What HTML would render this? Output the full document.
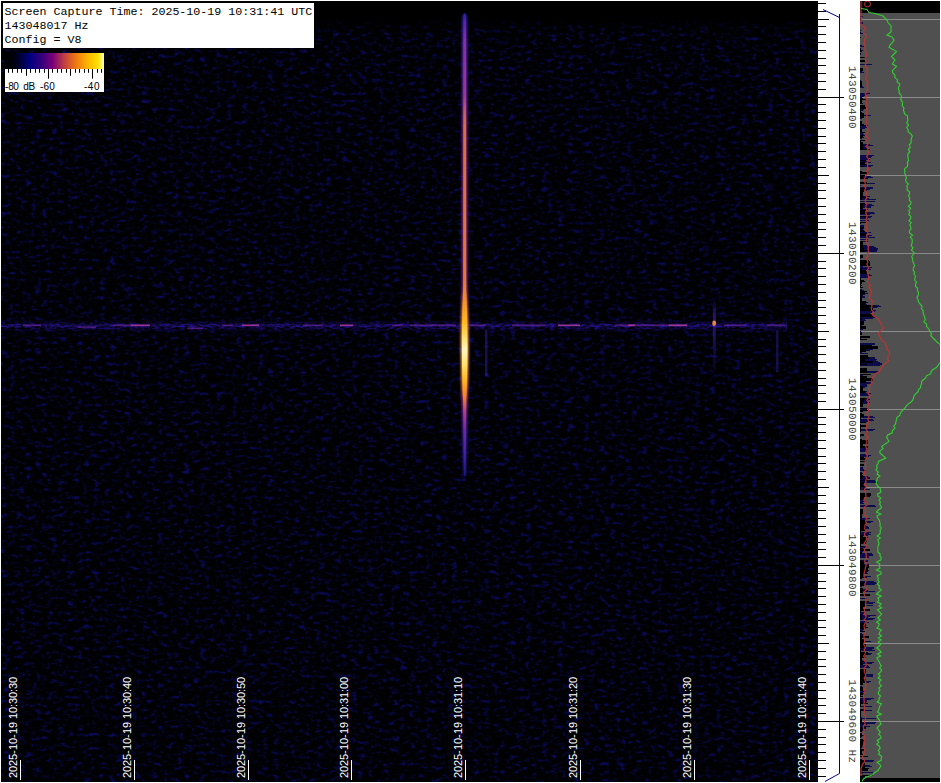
<!DOCTYPE html><html><head><meta charset="utf-8"><style>html,body{margin:0;padding:0;background:#fff;width:941px;height:783px;overflow:hidden}svg{display:block}</style></head><body>
<svg width="941" height="783" viewBox="0 0 941 783">
<defs>
<filter id="nz" x="0" y="0" width="100%" height="100%" color-interpolation-filters="sRGB">
<feTurbulence type="fractalNoise" baseFrequency="0.12 0.27" numOctaves="2" seed="5"/>
<feColorMatrix type="matrix" values="1 0 0 0 0  0 0 0 0 0  0 0 0 0 0  0 0 0 0 1" result="a"/>
<feTurbulence type="fractalNoise" baseFrequency="0.19 0.24" numOctaves="2" seed="23"/>
<feColorMatrix type="matrix" values="1 0 0 0 0  0 0 0 0 0  0 0 0 0 0  0 0 0 0 1" result="b"/>
<feComposite in="a" in2="b" operator="arithmetic" k1="0" k2="0.707" k3="0.707" k4="-0.207"/>
<feComponentTransfer><feFuncR type="table" tableValues="0 0 0 0 0 0.03 0.22 0.55 0.85 1 1"/><feFuncA type="linear" slope="0" intercept="1"/></feComponentTransfer>
<feColorMatrix type="matrix" values="0.035 0 0 0 0.003  0.035 0 0 0 0.003  0.34 0 0 0 0.008  0 0 0 0 1"/>
</filter>
<linearGradient id="cb" x1="0" x2="1" y1="0" y2="0">
<stop offset="0" stop-color="#000000"/><stop offset="0.1" stop-color="#000010"/><stop offset="0.25" stop-color="#000080"/><stop offset="0.38" stop-color="#3a007a"/><stop offset="0.48" stop-color="#7a007a"/><stop offset="0.6" stop-color="#c04040"/><stop offset="0.72" stop-color="#f07a10"/><stop offset="0.86" stop-color="#ffc000"/><stop offset="0.94" stop-color="#ffe000"/><stop offset="1" stop-color="#ffffc0"/>
</linearGradient>
<linearGradient id="vl" x1="0" x2="0" y1="0" y2="1" gradientUnits="userSpaceOnUse" >
</linearGradient>
</defs>
<rect x="1" y="1" width="817" height="781" fill="#000"/>
<mask id="nm" maskUnits="userSpaceOnUse" x="0" y="0" width="941" height="783"><rect x="1" y="18" width="817" height="764" fill="url(#fm)"/></mask><linearGradient id="fm" x1="0" x2="0" y1="18" y2="34" gradientUnits="userSpaceOnUse"><stop offset="0" stop-color="#000"/><stop offset="1" stop-color="#fff"/></linearGradient><rect x="1" y="18" width="817" height="764" filter="url(#nz)" mask="url(#nm)"/>
<filter id="sb2" x="-0.2" y="-2" width="1.4" height="5"><feGaussianBlur stdDeviation="0.5"/></filter>
<linearGradient id="hb" x1="0" x2="0" y1="321" y2="331" gradientUnits="userSpaceOnUse"><stop offset="0" stop-color="#1a1a90" stop-opacity="0"/><stop offset="0.45" stop-color="#2a1aa0" stop-opacity="0.5"/><stop offset="0.7" stop-color="#1a1a90" stop-opacity="0.3"/><stop offset="1" stop-color="#1a1a90" stop-opacity="0"/></linearGradient>
<filter id="nz2" x="0" y="0" width="100%" height="100%" color-interpolation-filters="sRGB"><feTurbulence type="fractalNoise" baseFrequency="0.2 0.5" numOctaves="2" seed="11"/><feComponentTransfer><feFuncR type="table" tableValues="0 0 0 0 0.1 0.45 0.8 1 1 1 1"/></feComponentTransfer><feColorMatrix type="matrix" values="0.12 0 0 0 0  0.05 0 0 0 0  0.5 0 0 0 0  0 0 0 0 1"/></filter>
<mask id="hm" maskUnits="userSpaceOnUse" x="0" y="0" width="941" height="783"><rect x="1" y="320" width="786" height="12" fill="url(#hmg)"/></mask><linearGradient id="hmg" x1="0" x2="0" y1="320" y2="332" gradientUnits="userSpaceOnUse"><stop offset="0" stop-color="#000"/><stop offset="0.45" stop-color="#fff"/><stop offset="0.7" stop-color="#ccc"/><stop offset="1" stop-color="#000"/></linearGradient>
<rect x="1" y="320" width="786" height="12" filter="url(#nz2)" mask="url(#hm)"/>
<rect x="1" y="324" width="786" height="3" fill="#2a1aa0" opacity="0.25"/>
<rect x="23" y="324.5" width="18" height="1.6" fill="#7a2aa8" opacity="0.55" filter="url(#sb2)"/>
<rect x="78" y="326.5" width="18" height="1.6" fill="#7a2aa8" opacity="0.55" filter="url(#sb2)"/>
<rect x="113" y="324.5" width="18" height="1.6" fill="#7a2aa8" opacity="0.55" filter="url(#sb2)"/>
<rect x="187" y="327.5" width="16" height="1.6" fill="#7a2aa8" opacity="0.55" filter="url(#sb2)"/>
<rect x="222" y="324.5" width="11" height="1.6" fill="#7a2aa8" opacity="0.55" filter="url(#sb2)"/>
<rect x="303" y="324.5" width="20" height="1.6" fill="#7a2aa8" opacity="0.55" filter="url(#sb2)"/>
<rect x="392" y="324.5" width="11" height="1.6" fill="#7a2aa8" opacity="0.55" filter="url(#sb2)"/>
<rect x="410" y="324.5" width="46" height="1.6" fill="#7a2aa8" opacity="0.55" filter="url(#sb2)"/>
<rect x="470" y="324.5" width="16" height="1.6" fill="#7a2aa8" opacity="0.55" filter="url(#sb2)"/>
<rect x="512" y="324.5" width="33" height="1.6" fill="#7a2aa8" opacity="0.55" filter="url(#sb2)"/>
<rect x="615" y="324.5" width="72" height="1.6" fill="#7a2aa8" opacity="0.55" filter="url(#sb2)"/>
<rect x="724" y="324.5" width="22" height="1.6" fill="#7a2aa8" opacity="0.55" filter="url(#sb2)"/>
<rect x="767" y="324.5" width="18" height="1.6" fill="#7a2aa8" opacity="0.55" filter="url(#sb2)"/>
<rect x="131" y="324.5" width="19" height="1.6" fill="#b03a98" opacity="0.85" filter="url(#sb2)"/>
<rect x="242" y="324.5" width="17" height="1.6" fill="#b03a98" opacity="0.85" filter="url(#sb2)"/>
<rect x="340" y="324.5" width="13" height="1.6" fill="#b03a98" opacity="0.85" filter="url(#sb2)"/>
<rect x="558" y="324.5" width="22" height="1.6" fill="#b03a98" opacity="0.85" filter="url(#sb2)"/>
<rect x="628" y="324.5" width="7" height="1.6" fill="#b03a98" opacity="0.85" filter="url(#sb2)"/>
<rect x="669" y="324.5" width="18" height="1.6" fill="#b03a98" opacity="0.85" filter="url(#sb2)"/>
<linearGradient id="sg" x1="0" x2="0" y1="12" y2="476" gradientUnits="userSpaceOnUse"><stop offset="0.0000" stop-color="#202090"/><stop offset="0.0216" stop-color="#5a24a8"/><stop offset="0.0603" stop-color="#8030a8"/><stop offset="0.1789" stop-color="#9a3898"/><stop offset="0.2112" stop-color="#c05a70"/><stop offset="0.2435" stop-color="#d87040"/><stop offset="0.5776" stop-color="#e07a38"/><stop offset="0.6207" stop-color="#f09028"/><stop offset="0.6681" stop-color="#ffb820"/><stop offset="0.7026" stop-color="#ffe070"/><stop offset="0.7284" stop-color="#fff6c0"/><stop offset="0.7586" stop-color="#ffe070"/><stop offset="0.7931" stop-color="#ffb820"/><stop offset="0.8319" stop-color="#f08028"/><stop offset="0.8621" stop-color="#b04080"/><stop offset="0.9009" stop-color="#7028a0"/><stop offset="0.9655" stop-color="#3a20a0"/><stop offset="1.0000" stop-color="#181870"/></linearGradient>
<linearGradient id="sh" x1="0" x2="0" y1="12" y2="476" gradientUnits="userSpaceOnUse"><stop offset="0.0000" stop-color="#101060"/><stop offset="0.0216" stop-color="#2a1a90"/><stop offset="0.0603" stop-color="#4a2098"/><stop offset="0.1789" stop-color="#5a2090"/><stop offset="0.2435" stop-color="#702078"/><stop offset="0.5776" stop-color="#782478"/><stop offset="0.6207" stop-color="#a04060"/><stop offset="0.6681" stop-color="#e07030"/><stop offset="0.7284" stop-color="#f0a040"/><stop offset="0.7931" stop-color="#e07030"/><stop offset="0.8319" stop-color="#a03870"/><stop offset="0.8621" stop-color="#602090"/><stop offset="0.9224" stop-color="#3020a0"/><stop offset="1.0000" stop-color="#101060"/></linearGradient>
<filter id="sb" x="-1" y="-0.1" width="3" height="1.2"><feGaussianBlur stdDeviation="0.6"/></filter>
<filter id="sb3" x="-1" y="-0.1" width="3" height="1.2"><feGaussianBlur stdDeviation="0.9"/></filter>
<path d="M462.0,16 Q464.7,10 467.4,16 L467.6,290 C469.0,320 469.0,372 467.6,400 L466.4,476 L463.0,476 L461.8,400 C460.4,372 460.4,320 461.8,290 Z" fill="url(#sh)" filter="url(#sb3)"/>
<path d="M463.4,15 Q464.7,12 466.0,15 L466.3,290 C467.9,320 467.9,372 466.3,400 L465.5,476 L463.9,476 L463.1,400 C461.5,372 461.5,320 463.1,290 Z" fill="url(#sg)" filter="url(#sb)"/>
<rect x="485" y="330" width="2.5" height="46" fill="#3a20a0" opacity="0.45" filter="url(#sb)"/>
<linearGradient id="v714" x1="0" x2="0" y1="298" y2="370" gradientUnits="userSpaceOnUse"><stop offset="0" stop-color="#3020a0" stop-opacity="0"/><stop offset="0.25" stop-color="#4a22a8" stop-opacity="0.6"/><stop offset="0.5" stop-color="#3020a0" stop-opacity="0.55"/><stop offset="1" stop-color="#3020a0" stop-opacity="0.1"/></linearGradient><rect x="712.8" y="298" width="3" height="72" fill="url(#v714)" filter="url(#sb)"/>
<rect x="776" y="330" width="2.5" height="42" fill="#3020a0" opacity="0.4" filter="url(#sb)"/>
<ellipse cx="714.2" cy="323.2" rx="1.9" ry="2.8" fill="#e8804a" filter="url(#sb)"/>
<rect x="3" y="3" width="311" height="45" fill="#fff"/>
<text x="4.5" y="15" font-family="Liberation Mono, monospace" font-size="11.67" fill="#000">Screen Capture Time: 2025-10-19 10:31:41 UTC</text>
<text x="4.5" y="29" font-family="Liberation Mono, monospace" font-size="11.67" fill="#000">143048017 Hz</text>
<text x="4.5" y="43" font-family="Liberation Mono, monospace" font-size="11.67" fill="#000">Config = V8</text>
<rect x="5" y="53" width="99" height="16" fill="url(#cb)"/>
<rect x="5" y="69" width="99" height="23" fill="#fff"/>
<path d="M8.5,69V72.8 M12.5,69V72.8 M17.5,69V72.8 M21.5,69V72.8 M26.5,69V75.8 M30.5,69V72.8 M35.5,69V72.8 M39.5,69V72.8 M44.5,69V72.8 M48.5,69V78.7 M52.5,69V72.8 M57.5,69V72.8 M61.5,69V72.8 M66.5,69V72.8 M70.5,69V75.8 M75.5,69V72.8 M79.5,69V72.8 M84.5,69V72.8 M88.5,69V72.8 M92.5,69V78.7 M97.5,69V72.8 M101.5,69V72.8" stroke="#000" stroke-width="1" fill="none"/>
<text y="89.5" font-family="Liberation Sans, sans-serif" font-size="10" fill="#000"><tspan x="5.1 8.3 13.3 19.3 23.3 28.6">-80 dB</tspan></text>
<text y="89.5" font-family="Liberation Sans, sans-serif" font-size="10" fill="#000"><tspan x="39.9 43.6 49.3">-60</tspan></text>
<text y="89.5" font-family="Liberation Sans, sans-serif" font-size="10" fill="#000"><tspan x="83.9 87.8 94.1">-40</tspan></text>
<path d="M20.5,760V780" stroke="#fff" stroke-width="1"/>
<text transform="translate(17.2,778) rotate(-90)" font-family="Liberation Sans, sans-serif" font-size="11" fill="#fff"><tspan x="0 6 12 18 24 28 34 40 44 50 56 59 65 71 74 80 86 89 95">2025-10-19 10:30:30</tspan></text>
<path d="M134.5,760V780" stroke="#fff" stroke-width="1"/>
<text transform="translate(131.2,778) rotate(-90)" font-family="Liberation Sans, sans-serif" font-size="11" fill="#fff"><tspan x="0 6 12 18 24 28 34 40 44 50 56 59 65 71 74 80 86 89 95">2025-10-19 10:30:40</tspan></text>
<path d="M248.5,760V780" stroke="#fff" stroke-width="1"/>
<text transform="translate(245.2,778) rotate(-90)" font-family="Liberation Sans, sans-serif" font-size="11" fill="#fff"><tspan x="0 6 12 18 24 28 34 40 44 50 56 59 65 71 74 80 86 89 95">2025-10-19 10:30:50</tspan></text>
<path d="M351.5,760V780" stroke="#fff" stroke-width="1"/>
<text transform="translate(348.2,778) rotate(-90)" font-family="Liberation Sans, sans-serif" font-size="11" fill="#fff"><tspan x="0 6 12 18 24 28 34 40 44 50 56 59 65 71 74 80 86 89 95">2025-10-19 10:31:00</tspan></text>
<path d="M465.5,760V780" stroke="#fff" stroke-width="1"/>
<text transform="translate(462.2,778) rotate(-90)" font-family="Liberation Sans, sans-serif" font-size="11" fill="#fff"><tspan x="0 6 12 18 24 28 34 40 44 50 56 59 65 71 74 80 86 89 95">2025-10-19 10:31:10</tspan></text>
<path d="M580.5,760V780" stroke="#fff" stroke-width="1"/>
<text transform="translate(577.2,778) rotate(-90)" font-family="Liberation Sans, sans-serif" font-size="11" fill="#fff"><tspan x="0 6 12 18 24 28 34 40 44 50 56 59 65 71 74 80 86 89 95">2025-10-19 10:31:20</tspan></text>
<path d="M694.5,760V780" stroke="#fff" stroke-width="1"/>
<text transform="translate(691.2,778) rotate(-90)" font-family="Liberation Sans, sans-serif" font-size="11" fill="#fff"><tspan x="0 6 12 18 24 28 34 40 44 50 56 59 65 71 74 80 86 89 95">2025-10-19 10:31:30</tspan></text>
<path d="M809.5,760V780" stroke="#fff" stroke-width="1"/>
<text transform="translate(806.2,778) rotate(-90)" font-family="Liberation Sans, sans-serif" font-size="11" fill="#fff"><tspan x="0 6 12 18 24 28 34 40 44 50 56 59 65 71 74 80 86 89 95">2025-10-19 10:31:40</tspan></text>
<path d="M818,3.5H826 M818,11.5H826 M818,19.5H829 M818,26.5H826 M818,34.5H826 M818,42.5H826 M818,50.5H826 M818,58.5H826 M818,65.5H826 M818,73.5H826 M818,81.5H826 M818,89.5H826 M818,97.5H844 M818,104.5H826 M818,112.5H826 M818,120.5H826 M818,128.5H826 M818,136.5H826 M818,143.5H826 M818,151.5H826 M818,159.5H826 M818,167.5H826 M818,175.5H829 M818,183.5H826 M818,190.5H826 M818,198.5H826 M818,206.5H826 M818,214.5H826 M818,222.5H826 M818,229.5H826 M818,237.5H826 M818,245.5H826 M818,253.5H844 M818,261.5H826 M818,268.5H826 M818,276.5H826 M818,284.5H826 M818,292.5H826 M818,300.5H826 M818,307.5H826 M818,315.5H826 M818,323.5H826 M818,331.5H829 M818,339.5H826 M818,346.5H826 M818,354.5H826 M818,362.5H826 M818,370.5H826 M818,378.5H826 M818,385.5H826 M818,393.5H826 M818,401.5H826 M818,409.5H844 M818,417.5H826 M818,424.5H826 M818,432.5H826 M818,440.5H826 M818,448.5H826 M818,456.5H826 M818,463.5H826 M818,471.5H826 M818,479.5H826 M818,487.5H829 M818,495.5H826 M818,503.5H826 M818,510.5H826 M818,518.5H826 M818,526.5H826 M818,534.5H826 M818,542.5H826 M818,549.5H826 M818,557.5H826 M818,565.5H844 M818,573.5H826 M818,581.5H826 M818,588.5H826 M818,596.5H826 M818,604.5H826 M818,612.5H826 M818,620.5H826 M818,627.5H826 M818,635.5H826 M818,643.5H829 M818,651.5H826 M818,659.5H826 M818,666.5H826 M818,674.5H826 M818,682.5H826 M818,690.5H826 M818,698.5H826 M818,705.5H826 M818,713.5H826 M818,721.5H844 M818,729.5H826 M818,737.5H826 M818,744.5H826 M818,752.5H826 M818,760.5H826 M818,768.5H826 M818,776.5H826" stroke="#000" stroke-width="1" fill="none"/>
<path d="M823,9.5 L839.5,17.5 M839.5,14 V773.5 L825,781.5" stroke="#00008b" stroke-width="1" fill="none"/>
<text transform="translate(849,97.6) rotate(90)" font-family="Liberation Mono, monospace" font-size="11" letter-spacing="0.4" fill="#444" text-anchor="middle">143050400</text>
<text transform="translate(849,253.6) rotate(90)" font-family="Liberation Mono, monospace" font-size="11" letter-spacing="0.4" fill="#444" text-anchor="middle">143050200</text>
<text transform="translate(849,409.6) rotate(90)" font-family="Liberation Mono, monospace" font-size="11" letter-spacing="0.4" fill="#444" text-anchor="middle">143050000</text>
<text transform="translate(849,565.6) rotate(90)" font-family="Liberation Mono, monospace" font-size="11" letter-spacing="0.4" fill="#444" text-anchor="middle">143049800</text>
<text transform="translate(849,721.6) rotate(90)" font-family="Liberation Mono, monospace" font-size="11" letter-spacing="0.4" fill="#444" text-anchor="middle">143049600 Hz</text>
<clipPath id="pc2"><rect x="860" y="1" width="80" height="781"/></clipPath>
<rect x="860" y="1" width="80" height="781" fill="#505050"/>
<rect x="860" y="1" width="80" height="12" fill="#000"/>
<rect x="860" y="778" width="80" height="4" fill="#000"/>
<path d="M860,19.5H940 M860,97.5H940 M860,175.5H940 M860,253.5H940 M860,331.5H940 M860,409.5H940 M860,487.5H940 M860,565.5H940 M860,643.5H940 M860,721.5H940" stroke="#8a8a8a" stroke-width="1" fill="none"/>
<path d="M860,16.5h3 M860,18.5h1 M860,19.5h1 M860,22.5h3 M860,23.5h3 M860,30.5h1 M860,32.5h1 M860,33.5h3 M860,45.5h2 M860,46.5h4 M860,48.5h1 M860,50.5h3 M860,51.5h2 M860,53.5h1 M860,54.5h1 M860,60.5h1 M860,64.5h12 M860,71.5h2 M860,72.5h4 M860,80.5h1 M860,81.5h2 M860,86.5h3 M860,87.5h4 M860,93.5h10 M860,94.5h7 M860,95.5h5 M860,96.5h4 M860,97.5h2 M860,107.5h5 M860,108.5h2 M860,109.5h4 M860,110.5h3 M860,115.5h11 M860,118.5h2 M860,125.5h8 M860,126.5h6 M860,127.5h8 M860,128.5h5 M860,132.5h1 M860,133.5h3 M860,134.5h4 M860,135.5h5 M860,136.5h2 M860,137.5h4 M860,138.5h2 M860,141.5h1 M860,142.5h1 M860,144.5h10 M860,145.5h13 M860,146.5h7 M860,147.5h8 M860,148.5h7 M860,149.5h10 M860,155.5h14 M860,156.5h12 M860,157.5h11 M860,158.5h9 M860,159.5h10 M860,161.5h9 M860,162.5h11 M860,164.5h7 M860,165.5h13 M860,166.5h11 M860,174.5h1 M860,175.5h1 M860,176.5h11 M860,177.5h13 M860,183.5h15 M860,185.5h1 M860,187.5h13 M860,188.5h13 M860,189.5h10 M860,190.5h7 M860,196.5h10 M860,197.5h7 M860,198.5h9 M860,199.5h16 M860,201.5h15 M860,204.5h12 M860,205.5h14 M860,206.5h11 M860,207.5h11 M860,209.5h8 M860,210.5h6 M860,212.5h14 M860,213.5h15 M860,214.5h10 M860,216.5h12 M860,217.5h11 M860,218.5h8 M860,220.5h9 M860,223.5h1 M860,225.5h4 M860,226.5h4 M860,227.5h2 M860,228.5h4 M860,229.5h3 M860,231.5h1 M860,232.5h11 M860,233.5h8 M860,234.5h5 M860,235.5h12 M860,236.5h9 M860,237.5h15 M860,239.5h8 M860,241.5h8 M860,243.5h2 M860,245.5h7 M860,246.5h14 M860,247.5h16 M860,248.5h18 M860,249.5h18 M860,250.5h17 M860,251.5h17 M860,258.5h1 M860,263.5h10 M860,264.5h9 M860,265.5h9 M860,266.5h3 M860,267.5h12 M860,268.5h10 M860,269.5h11 M860,271.5h1 M860,273.5h2 M860,274.5h10 M860,275.5h12 M860,276.5h9 M860,277.5h8 M860,281.5h2 M860,282.5h1 M860,283.5h2 M860,285.5h2 M860,289.5h2 M860,290.5h4 M860,291.5h4 M860,292.5h1 M860,293.5h8 M860,294.5h5 M860,295.5h3 M860,296.5h5 M860,297.5h5 M860,298.5h2 M860,299.5h1 M860,300.5h2 M860,302.5h8 M860,303.5h6 M860,304.5h7 M860,305.5h19 M860,306.5h21 M860,307.5h17 M860,310.5h16 M860,311.5h15 M860,312.5h12 M860,313.5h10 M860,314.5h13 M860,315.5h13 M860,316.5h15 M860,317.5h16 M860,318.5h13 M860,319.5h5 M860,320.5h6 M860,321.5h3 M860,325.5h2 M860,326.5h2 M860,327.5h4 M860,328.5h4 M860,329.5h3 M860,331.5h1 M860,332.5h2 M860,336.5h9 M860,338.5h1 M860,343.5h15 M860,344.5h15 M860,345.5h11 M860,346.5h11 M860,347.5h12 M860,348.5h7 M860,349.5h13 M860,350.5h10 M860,352.5h2 M860,353.5h8 M860,356.5h6 M860,357.5h15 M860,358.5h15 M860,359.5h17 M860,360.5h16 M860,361.5h18 M860,362.5h20 M860,363.5h22 M860,364.5h22 M860,365.5h20 M860,368.5h6 M860,371.5h18 M860,372.5h17 M860,375.5h3 M860,376.5h5 M860,377.5h6 M860,378.5h6 M860,379.5h3 M860,380.5h3 M860,381.5h1 M860,382.5h11 M860,383.5h11 M860,384.5h7 M860,385.5h7 M860,386.5h7 M860,387.5h5 M860,388.5h2 M860,391.5h7 M860,392.5h6 M860,393.5h11 M860,394.5h8 M860,395.5h10 M860,398.5h9 M860,399.5h10 M860,400.5h8 M860,401.5h8 M860,402.5h10 M860,403.5h7 M860,409.5h7 M860,416.5h13 M860,417.5h15 M860,419.5h13 M860,420.5h14 M860,421.5h9 M860,422.5h6 M860,424.5h1 M860,426.5h3 M860,429.5h15 M860,430.5h13 M860,434.5h1 M860,436.5h1 M860,446.5h7 M860,447.5h6 M860,448.5h7 M860,449.5h8 M860,450.5h7 M860,451.5h7 M860,454.5h7 M860,455.5h11 M860,456.5h9 M860,467.5h3 M860,468.5h3 M860,469.5h4 M860,470.5h6 M860,472.5h2 M860,476.5h8 M860,477.5h10 M860,478.5h10 M860,479.5h7 M860,480.5h15 M860,481.5h16 M860,482.5h18 M860,485.5h4 M860,486.5h3 M860,487.5h6 M860,488.5h5 M860,489.5h10 M860,498.5h5 M860,499.5h4 M860,500.5h3 M860,501.5h5 M860,502.5h3 M860,503.5h4 M860,505.5h15 M860,506.5h16 M860,511.5h1 M860,518.5h10 M860,519.5h7 M860,520.5h6 M860,521.5h13 M860,522.5h11 M860,524.5h1 M860,526.5h8 M860,527.5h9 M860,528.5h9 M860,532.5h11 M860,533.5h9 M860,534.5h11 M860,535.5h8 M860,538.5h4 M860,539.5h5 M860,542.5h1 M860,544.5h1 M860,546.5h6 M860,547.5h7 M860,549.5h3 M860,550.5h3 M860,551.5h3 M860,552.5h1 M860,553.5h12 M860,554.5h13 M860,555.5h13 M860,556.5h9 M860,557.5h9 M860,560.5h8 M860,561.5h8 M860,562.5h6 M860,564.5h9 M860,565.5h6 M860,568.5h2 M860,569.5h4 M860,570.5h9 M860,571.5h7 M860,572.5h7 M860,573.5h8 M860,576.5h11 M860,577.5h7 M860,581.5h14 M860,582.5h16 M860,583.5h17 M860,584.5h15 M860,585.5h5 M860,586.5h2 M860,588.5h1 M860,589.5h7 M860,590.5h8 M860,591.5h15 M860,598.5h7 M860,602.5h15 M860,603.5h13 M860,605.5h13 M860,612.5h5 M860,613.5h4 M860,614.5h3 M860,615.5h16 M860,616.5h10 M860,617.5h8 M860,618.5h15 M860,619.5h13 M860,621.5h7 M860,622.5h9 M860,624.5h2 M860,627.5h1 M860,628.5h3 M860,629.5h4 M860,630.5h3 M860,633.5h2 M860,634.5h4 M860,635.5h4 M860,636.5h2 M860,638.5h2 M860,641.5h11 M860,645.5h2 M860,646.5h2 M860,647.5h14 M860,648.5h14 M860,649.5h12 M860,650.5h15 M860,653.5h12 M860,654.5h11 M860,656.5h1 M860,660.5h4 M860,661.5h6 M860,662.5h14 M860,663.5h12 M860,665.5h8 M860,666.5h9 M860,667.5h10 M860,669.5h2 M860,674.5h13 M860,675.5h13 M860,676.5h13 M860,681.5h11 M860,682.5h9 M860,686.5h2 M860,691.5h5 M860,692.5h3 M860,693.5h2 M860,698.5h14 M860,699.5h11 M860,700.5h7 M860,701.5h7 M860,702.5h6 M860,703.5h5 M860,706.5h12 M860,709.5h3 M860,710.5h12 M860,717.5h2 M860,718.5h16 M860,722.5h16 M860,723.5h15 M860,724.5h7 M860,725.5h4 M860,726.5h10 M860,728.5h5 M860,729.5h3 M860,730.5h4 M860,733.5h2 M860,735.5h2 M860,737.5h1 M860,740.5h5 M860,741.5h4 M860,743.5h2 M860,747.5h2 M860,748.5h1 M860,753.5h2 M860,754.5h3 M860,756.5h3 M860,759.5h2 M860,760.5h14 M860,761.5h13 M860,765.5h10 M860,766.5h12 M860,772.5h13 M860,773.5h3 M860,775.5h1 M860,777.5h5" stroke="#0c0c4c" stroke-width="1" fill="none"/>
<path d="M860,20.5h1 M860,37.5h1 M860,49.5h1 M860,50.5h1 M860,51.5h1 M860,53.5h1 M860,57.5h6 M860,60.5h5 M860,61.5h5 M860,68.5h3 M860,69.5h3 M860,70.5h3 M860,81.5h2 M860,82.5h2 M860,83.5h2 M860,84.5h2 M860,85.5h2 M860,86.5h2 M860,98.5h3 M860,99.5h6 M860,100.5h2 M860,101.5h2 M860,102.5h2 M860,103.5h3 M860,105.5h5 M860,106.5h5 M860,107.5h6 M860,108.5h6 M860,109.5h1 M860,110.5h1 M860,111.5h1 M860,112.5h2 M860,113.5h4 M860,114.5h4 M860,115.5h4 M860,116.5h4 M860,117.5h4 M860,121.5h2 M860,122.5h2 M860,123.5h2 M860,124.5h4 M860,125.5h4 M860,127.5h1 M860,129.5h2 M860,130.5h2 M860,131.5h2 M860,132.5h5 M860,135.5h3 M860,136.5h3 M860,137.5h3 M860,140.5h5 M860,142.5h3 M860,143.5h3 M860,144.5h3 M860,145.5h3 M860,146.5h3 M860,147.5h3 M860,148.5h3 M860,149.5h9 M860,160.5h6 M860,162.5h5 M860,163.5h5 M860,164.5h5 M860,166.5h4 M860,171.5h2 M860,172.5h9 M860,173.5h7 M860,175.5h5 M860,176.5h3 M860,177.5h3 M860,178.5h8 M860,182.5h7 M860,183.5h7 M860,188.5h5 M860,189.5h5 M860,190.5h5 M860,191.5h4 M860,192.5h3 M860,193.5h3 M860,194.5h3 M860,195.5h3 M860,196.5h3 M860,197.5h6 M860,198.5h2 M860,199.5h2 M860,203.5h5 M860,204.5h3 M860,205.5h3 M860,206.5h3 M860,207.5h3 M860,208.5h3 M860,210.5h5 M860,211.5h5 M860,212.5h5 M860,213.5h5 M860,216.5h7 M860,222.5h6 M860,223.5h1 M860,227.5h4 M860,228.5h4 M860,230.5h4 M860,231.5h5 M860,233.5h6 M860,234.5h6 M860,235.5h6 M860,241.5h3 M860,242.5h3 M860,243.5h3 M860,244.5h3 M860,245.5h3 M860,246.5h3 M860,247.5h3 M860,248.5h4 M860,249.5h4 M860,250.5h8 M860,251.5h4 M860,255.5h3 M860,256.5h3 M860,257.5h3 M860,260.5h9 M860,261.5h10 M860,262.5h10 M860,263.5h10 M860,264.5h10 M860,265.5h10 M860,268.5h2 M860,269.5h2 M860,270.5h6 M860,271.5h7 M860,272.5h7 M860,273.5h7 M860,278.5h1 M860,279.5h1 M860,280.5h4 M860,281.5h5 M860,282.5h2 M860,283.5h2 M860,284.5h1 M860,285.5h1 M860,286.5h1 M860,287.5h3 M860,290.5h2 M860,291.5h7 M860,292.5h5 M860,293.5h5 M860,294.5h2 M860,295.5h2 M860,296.5h2 M860,297.5h2 M860,298.5h2 M860,299.5h2 M860,300.5h2 M860,301.5h6 M860,302.5h6 M860,303.5h5 M860,304.5h5 M860,305.5h15 M860,306.5h15 M860,307.5h9 M860,308.5h13 M860,309.5h13 M860,310.5h13 M860,314.5h13 M860,315.5h13 M860,316.5h13 M860,318.5h2 M860,319.5h2 M860,321.5h4 M860,322.5h4 M860,323.5h4 M860,324.5h4 M860,326.5h6 M860,327.5h6 M860,328.5h6 M860,333.5h2 M860,334.5h2 M860,336.5h10 M860,337.5h10 M860,339.5h7 M860,345.5h12 M860,346.5h18 M860,347.5h18 M860,348.5h18 M860,349.5h6 M860,350.5h6 M860,351.5h6 M860,355.5h8 M860,356.5h8 M860,357.5h9 M860,358.5h9 M860,359.5h5 M860,360.5h5 M860,361.5h13 M860,362.5h13 M860,363.5h2 M860,364.5h7 M860,368.5h7 M860,369.5h7 M860,370.5h7 M860,371.5h7 M860,372.5h7 M860,374.5h11 M860,376.5h7 M860,377.5h7 M860,378.5h13 M860,379.5h13 M860,380.5h13 M860,381.5h6 M860,382.5h6 M860,386.5h3 M860,387.5h3 M860,388.5h3 M860,389.5h3 M860,390.5h3 M860,391.5h5 M860,392.5h5 M860,398.5h5 M860,399.5h5 M860,400.5h4 M860,401.5h4 M860,402.5h3 M860,403.5h3 M860,404.5h3 M860,405.5h3 M860,406.5h3 M860,408.5h8 M860,410.5h8 M860,411.5h3 M860,413.5h2 M860,414.5h4 M860,415.5h4 M860,416.5h4 M860,417.5h1 M860,418.5h1 M860,422.5h6 M860,425.5h7 M860,426.5h6 M860,427.5h1 M860,428.5h1 M860,429.5h1 M860,430.5h1 M860,431.5h1 M860,434.5h4 M860,435.5h4 M860,439.5h2 M860,440.5h8 M860,441.5h8 M860,442.5h8 M860,443.5h8 M860,444.5h3 M860,445.5h3 M860,446.5h8 M860,447.5h8 M860,456.5h1 M860,457.5h4 M860,458.5h6 M860,459.5h6 M860,461.5h6 M860,464.5h4 M860,465.5h4 M860,473.5h3 M860,474.5h2 M860,475.5h3 M860,476.5h3 M860,477.5h3 M860,478.5h3 M860,480.5h9 M860,482.5h4 M860,483.5h4 M860,484.5h4 M860,485.5h4 M860,486.5h6 M860,487.5h1 M860,488.5h1 M860,489.5h1 M860,493.5h11 M860,494.5h11 M860,495.5h11 M860,496.5h10 M860,497.5h4 M860,498.5h4 M860,499.5h4 M860,509.5h3 M860,510.5h3 M860,511.5h3 M860,512.5h3 M860,513.5h3 M860,514.5h2 M860,515.5h2 M860,516.5h2 M860,517.5h2 M860,519.5h2 M860,520.5h6 M860,521.5h6 M860,522.5h6 M860,523.5h6 M860,524.5h6 M860,525.5h6 M860,526.5h6 M860,527.5h6 M860,528.5h6 M860,529.5h6 M860,530.5h6 M860,531.5h1 M860,532.5h1 M860,533.5h1 M860,535.5h3 M860,536.5h3 M860,537.5h8 M860,538.5h7 M860,539.5h7 M860,540.5h7 M860,541.5h7 M860,542.5h6 M860,543.5h6 M860,544.5h1 M860,545.5h1 M860,546.5h3 M860,548.5h3 M860,549.5h10 M860,550.5h10 M860,552.5h2 M860,553.5h2 M860,560.5h1 M860,561.5h5 M860,562.5h4 M860,563.5h4 M860,564.5h4 M860,565.5h9 M860,566.5h9 M860,567.5h9 M860,568.5h8 M860,569.5h8 M860,570.5h8 M860,571.5h8 M860,572.5h5 M860,573.5h4 M860,574.5h4 M860,575.5h4 M860,576.5h4 M860,577.5h4 M860,578.5h2 M860,582.5h5 M860,583.5h4 M860,584.5h4 M860,585.5h4 M860,588.5h3 M860,589.5h3 M860,590.5h3 M860,591.5h3 M860,592.5h3 M860,594.5h10 M860,595.5h10 M860,601.5h9 M860,602.5h6 M860,603.5h6 M860,604.5h5 M860,605.5h5 M860,606.5h5 M860,607.5h3 M860,608.5h3 M860,609.5h10 M860,610.5h10 M860,611.5h1 M860,612.5h1 M860,614.5h2 M860,615.5h2 M860,616.5h2 M860,617.5h2 M860,618.5h2 M860,619.5h2 M860,623.5h6 M860,624.5h6 M860,625.5h6 M860,626.5h6 M860,627.5h8 M860,628.5h6 M860,631.5h5 M860,634.5h1 M860,635.5h1 M860,636.5h9 M860,637.5h9 M860,638.5h2 M860,639.5h4 M860,640.5h4 M860,641.5h4 M860,642.5h4 M860,643.5h4 M860,644.5h6 M860,645.5h6 M860,646.5h6 M860,647.5h4 M860,649.5h5 M860,650.5h1 M860,651.5h1 M860,652.5h8 M860,653.5h8 M860,654.5h8 M860,655.5h5 M860,656.5h5 M860,657.5h6 M860,658.5h2 M860,659.5h2 M860,660.5h2 M860,661.5h5 M860,662.5h2 M860,663.5h3 M860,664.5h3 M860,666.5h1 M860,669.5h6 M860,670.5h6 M860,671.5h6 M860,672.5h6 M860,673.5h6 M860,674.5h6 M860,675.5h5 M860,676.5h5 M860,677.5h5 M860,678.5h5 M860,679.5h6 M860,680.5h6 M860,681.5h6 M860,682.5h6 M860,683.5h3 M860,684.5h3 M860,687.5h3 M860,688.5h3 M860,689.5h3 M860,690.5h3 M860,693.5h4 M860,694.5h4 M860,695.5h1 M860,696.5h3 M860,700.5h2 M860,701.5h2 M860,702.5h2 M860,703.5h8 M860,704.5h1 M860,705.5h1 M860,706.5h1 M860,709.5h4 M860,710.5h2 M860,711.5h1 M860,712.5h1 M860,713.5h1 M860,714.5h1 M860,715.5h1 M860,716.5h1 M860,719.5h2 M860,720.5h2 M860,721.5h2 M860,722.5h2 M860,723.5h6 M860,727.5h6 M860,728.5h6 M860,729.5h2 M860,730.5h2 M860,731.5h2 M860,734.5h2 M860,735.5h4 M860,736.5h2 M860,739.5h3 M860,740.5h3 M860,741.5h3 M860,742.5h3 M860,743.5h3 M860,744.5h3 M860,745.5h3 M860,746.5h3 M860,747.5h1 M860,749.5h4 M860,750.5h4 M860,751.5h2 M860,752.5h2 M860,753.5h2 M860,754.5h3 M860,756.5h8 M860,760.5h5 M860,761.5h5 M860,762.5h5 M860,763.5h5 M860,764.5h5 M860,765.5h5 M860,766.5h5 M860,767.5h5 M860,768.5h9 M860,769.5h8 M860,770.5h8 M860,771.5h2 M860,772.5h1 M860,773.5h1 M860,775.5h13 M860,776.5h5 M860,777.5h1" stroke="#000" stroke-width="1" fill="none"/>
<polyline points="861.0,1.0 861.0,3.0 861.0,5.0 861.0,7.0 861.0,9.0 861.0,11.0 861.0,13.0 861.0,15.0 861.0,17.0 861.0,19.0 861.0,21.0 861.0,23.0 861.0,25.0 865.9,28.0 863.8,30.3 863.5,32.7 865.9,35.0 866.4,37.1 864.5,39.2 864.7,41.2 864.0,43.3 865.3,45.4 864.8,47.5 865.1,49.6 865.4,51.7 867.2,53.8 866.6,55.8 865.2,57.9 865.8,60.0 866.1,62.0 865.7,64.0 865.0,66.0 866.9,68.0 867.3,70.0 867.1,72.0 867.4,74.0 866.6,76.0 865.5,78.0 866.3,80.0 867.8,82.0 866.9,84.0 867.1,86.0 867.9,88.0 867.4,90.0 866.9,92.0 865.2,94.0 866.9,96.0 865.1,98.0 867.2,100.0 866.3,102.0 866.8,104.0 867.2,106.0 866.5,108.0 867.2,110.0 866.6,112.0 867.0,114.0 866.7,116.0 867.3,118.0 866.8,120.0 866.4,122.0 867.1,124.0 866.6,126.0 867.9,128.0 867.9,130.0 868.1,132.0 866.6,134.1 865.8,136.1 868.5,138.2 866.4,140.2 867.6,142.3 868.1,144.3 865.9,146.4 868.1,148.4 867.7,150.5 868.5,152.5 868.1,154.6 866.6,156.6 868.4,158.7 868.4,160.7 866.9,162.8 867.7,164.8 867.6,166.9 869.0,168.9 866.2,171.0 868.3,173.0 866.3,175.3 864.9,177.7 864.0,180.0 864.7,182.0 865.7,184.0 864.2,186.0 865.8,188.0 864.5,190.0 866.9,192.0 866.7,194.0 866.1,196.0 867.0,198.0 865.3,200.0 865.5,202.0 867.1,204.0 865.9,206.0 865.9,208.0 866.9,210.0 866.0,212.0 866.1,214.0 867.0,216.0 866.7,218.0 866.1,220.0 867.3,222.0 866.2,224.0 866.3,226.0 866.9,228.0 866.0,230.0 867.6,232.0 868.0,234.0 866.4,236.0 867.5,238.0 866.1,240.0 866.5,242.0 867.7,244.0 868.3,246.0 868.3,248.0 868.1,250.0 868.8,252.0 867.1,254.0 868.0,256.0 866.3,258.0 867.0,260.0 867.9,262.0 867.0,264.0 867.6,266.0 868.9,268.1 867.1,270.2 867.4,272.4 868.1,274.5 868.5,276.6 868.6,278.8 867.6,280.9 867.9,283.0 870.6,285.1 868.8,287.2 870.5,289.4 871.2,291.5 870.8,293.6 870.0,295.8 869.2,297.9 871.6,300.0 872.5,302.0 871.2,304.0 872.1,306.0 871.3,308.0 871.6,310.0 873.7,312.0 871.9,314.0 873.7,316.0 877.2,318.3 879.3,320.7 880.9,323.0 881.5,325.4 884.0,327.7 880.2,331.4 878.3,333.9 879.8,336.4 881.0,338.5 882.3,340.7 885.2,342.8 885.6,344.9 887.3,347.0 886.5,349.2 889.2,351.3 889.8,353.6 888.6,356.0 887.4,358.3 888.6,360.7 885.6,363.0 883.4,365.1 882.5,367.2 879.9,369.4 879.9,371.5 875.8,373.6 874.5,375.8 872.6,377.9 871.7,380.0 872.1,383.0 869.9,385.1 869.7,387.2 869.5,389.4 869.4,391.5 868.0,393.6 870.0,395.8 868.8,397.9 866.8,400.0 868.2,402.1 869.2,404.2 867.2,406.2 867.9,408.3 868.9,410.4 867.0,412.5 867.3,414.6 868.9,416.7 867.9,418.8 868.4,420.8 868.6,422.9 866.4,425.0 867.1,427.1 866.0,429.1 867.6,431.1 866.6,433.2 866.1,435.2 868.4,437.3 866.0,439.4 866.9,441.4 866.8,443.4 865.4,445.5 866.2,447.6 867.0,449.6 865.8,451.6 866.0,453.7 867.4,455.8 866.7,457.8 865.5,459.9 865.2,461.9 865.5,463.9 865.6,466.0 865.9,468.1 865.1,470.2 864.5,472.2 864.7,474.3 865.9,476.4 866.7,478.5 865.8,480.6 865.9,482.7 864.1,484.8 866.4,486.8 864.6,488.9 864.9,491.0 865.8,493.0 865.8,495.0 866.1,497.0 864.1,499.0 864.4,501.0 867.2,503.0 867.0,505.0 864.6,507.0 865.1,509.0 865.8,511.1 865.0,513.1 865.0,515.1 867.3,517.1 866.2,519.1 865.5,521.2 866.5,523.2 864.9,525.2 864.9,527.2 864.8,529.3 866.8,531.3 864.6,533.3 864.6,535.3 866.8,537.3 866.6,539.4 865.6,541.4 864.1,543.4 866.2,545.4 866.3,547.4 864.5,549.5 864.7,551.5 866.2,553.5 866.2,555.5 866.4,557.6 865.5,559.6 864.4,561.6 866.2,563.6 866.0,565.6 865.4,567.7 865.2,569.7 864.4,571.7 864.1,573.7 863.9,575.7 864.4,577.8 866.2,579.8 865.8,581.8 865.0,583.8 864.9,585.9 866.2,587.9 866.4,589.9 864.0,591.9 864.0,593.9 864.9,596.0 865.8,598.0 866.1,600.0 865.9,602.0 865.6,604.0 865.7,606.0 864.4,608.0 864.3,610.0 865.1,612.0 864.1,614.0 866.3,616.0 865.5,618.0 864.2,620.0 866.4,622.0 864.5,624.0 864.0,626.0 864.4,628.0 865.5,630.0 865.6,632.0 864.1,634.0 863.9,636.0 864.1,638.0 864.5,640.0 864.7,642.0 863.6,644.0 864.6,646.0 865.5,648.0 864.1,650.0 865.5,652.0 865.1,654.0 863.7,656.0 865.0,658.0 863.6,660.0 865.8,662.0 866.2,664.0 866.2,666.0 864.1,668.0 864.3,670.0 864.4,672.0 865.3,674.0 865.8,676.0 864.1,678.0 864.9,680.0 865.8,682.0 865.8,684.0 866.2,686.0 865.2,688.0 864.4,690.0 865.2,692.0 863.8,694.0 863.5,696.0 864.1,698.0 864.0,700.0 864.4,702.0 863.9,704.0 864.5,706.0 864.8,708.0 864.3,710.0 864.4,712.0 863.6,714.0 865.7,716.0 865.6,718.0 865.3,720.0 864.5,722.0 865.3,724.0 863.4,726.0 863.5,728.0 864.2,730.0 863.1,732.0 863.1,734.0 864.6,736.0 864.1,738.0 864.9,740.0 864.0,742.0 865.3,744.0 863.0,746.0 864.9,748.0 864.9,750.0 863.7,752.0 864.6,754.0 862.8,756.0 862.5,758.0 864.4,760.0 864.6,762.0 862.5,764.0 862.0,766.0 861.1,768.0 861.0,770.0 861.0,772.0 861.0,774.0 861.0,776.0" stroke="#c03232" stroke-width="1.3" stroke-opacity="0.9" fill="none"/>
<circle cx="867.5" cy="4" r="3" stroke="#b83030" stroke-width="1" fill="none" clip-path="url(#pc2)"/>
<clipPath id="pc"><rect x="860" y="1" width="80" height="781"/></clipPath>
<polyline clip-path="url(#pc)" points="861.0,8.5 867.0,9.5 868.0,11.0 869.0,12.5 875.0,13.5 883.0,16.0 887.0,20.0 888.0,22.5 891.0,26.0 891.0,32.0 887.0,35.0 892.0,37.0 894.0,40.0 892.5,42.4 890.1,44.9 889.0,47.3 896.5,51.5 891.5,56.5 894.9,59.8 892.4,64.0 896.5,66.4 892.4,70.6 892.8,72.9 895.1,75.2 894.7,77.4 897.4,79.7 897.2,81.9 899.9,84.2 899.0,86.4 898.3,88.6 899.2,90.8 899.0,93.0 901.1,95.2 901.4,97.5 900.7,99.7 902.3,101.8 902.5,103.8 902.3,105.9 904.0,108.0 903.4,110.0 904.1,112.0 904.6,114.0 907.6,116.0 907.3,118.0 908.1,120.3 906.7,122.6 908.6,125.0 906.7,127.3 908.2,129.6 908.0,131.8 910.9,133.9 912.3,136.1 911.5,138.3 910.9,140.5 911.2,142.7 909.2,144.9 910.3,147.1 908.5,149.4 909.8,151.6 908.0,153.8 907.7,156.0 908.2,158.2 908.6,160.3 907.3,162.5 907.8,164.6 907.3,166.8 904.4,168.9 904.8,171.1 904.8,173.2 906.5,178.0 905.5,180.0 906.2,182.0 908.4,184.0 906.8,186.0 907.5,188.0 907.1,190.0 909.6,192.0 909.4,194.0 908.5,196.0 909.8,198.0 909.2,200.1 911.2,202.1 910.7,204.2 908.3,206.2 910.7,208.3 908.7,210.3 909.8,212.4 908.7,214.4 910.8,216.5 910.7,218.5 908.9,220.6 911.2,222.6 909.8,224.7 910.7,226.8 911.1,228.8 909.4,230.9 909.5,233.0 912.6,235.1 910.2,237.2 912.1,239.2 912.3,241.3 911.9,243.5 911.2,245.7 913.0,247.9 911.4,250.2 914.1,252.4 913.1,254.6 911.7,256.8 912.7,259.0 912.8,261.2 913.6,263.4 914.6,265.6 913.4,267.8 913.1,270.0 914.5,272.0 914.0,274.0 915.4,276.0 915.0,278.0 914.7,280.0 916.5,282.0 915.7,284.0 915.4,286.0 917.3,288.0 917.4,290.4 918.5,292.7 918.4,295.1 916.9,297.4 918.1,299.8 918.6,302.0 920.2,304.2 922.0,306.4 921.5,308.6 923.1,310.8 923.1,313.0 923.9,315.2 924.7,317.5 925.2,319.7 923.9,321.9 926.8,324.2 926.4,326.4 928.7,328.7 929.8,331.0 931.5,333.4 930.8,335.7 933.0,338.0 935.1,340.0 936.9,342.0 939.8,344.0 940.7,346.0 943.7,348.0 945.4,350.0 946.0,352.0 946.0,357.0 942.5,359.1 942.4,361.2 939.4,363.3 938.1,365.4 936.5,367.5 933.0,369.5 931.0,371.6 930.8,373.7 926.4,375.8 925.7,377.9 923.1,380.0 921.4,381.6 921.7,383.6 920.6,385.6 920.7,387.6 918.5,389.6 918.1,391.6 915.8,393.7 914.1,395.8 913.4,397.8 912.9,399.9 911.0,402.0 908.0,404.1 906.2,406.1 904.8,408.2 902.5,410.5 900.3,412.9 900.0,415.2 896.8,417.6 896.5,419.9 895.8,422.0 895.6,424.0 893.8,426.1 894.9,428.2 892.3,430.5 892.3,432.8 887.7,435.0 886.6,437.3 889.0,441.4 881.6,446.4 883.1,448.6 880.0,450.8 879.9,453.0 885.7,458.0 878.3,461.4 878.2,463.6 876.4,465.8 877.4,468.0 876.0,470.0 878.3,472.0 877.1,474.0 879.9,476.0 877.3,478.0 877.1,480.0 876.3,482.0 876.5,484.0 877.5,486.0 880.0,488.0 880.5,490.0 881.0,492.0 877.7,494.0 877.9,496.0 880.9,498.0 879.0,500.0 880.5,502.0 879.6,504.0 880.9,506.0 881.4,508.0 878.4,510.0 876.4,512.0 880.8,514.0 876.9,516.0 877.7,518.0 879.3,520.0 879.8,522.0 880.2,524.0 879.9,526.0 881.5,528.0 880.2,530.0 880.3,532.0 879.9,534.0 877.1,536.0 880.3,538.0 877.7,540.0 878.6,542.0 879.1,544.0 878.1,546.0 877.8,548.0 877.9,550.0 878.0,552.0 880.1,554.0 880.0,556.0 881.3,558.0 880.6,560.0 876.7,562.0 879.8,564.0 879.0,566.0 880.0,568.0 876.5,570.0 881.0,572.0 881.0,574.0 877.0,576.0 878.4,578.0 878.0,580.0 879.1,582.0 877.2,584.0 879.6,586.0 878.8,588.0 881.3,590.0 878.9,592.0 876.4,594.0 881.3,596.0 877.8,598.0 879.0,600.0 877.4,602.0 881.2,604.0 879.1,606.0 881.6,608.0 877.3,610.0 879.5,612.0 881.5,614.0 879.7,616.0 877.7,618.0 880.5,620.0 876.6,622.0 879.3,624.0 878.6,626.0 876.9,628.0 881.4,630.0 879.8,632.0 879.0,634.0 881.5,636.0 878.3,638.0 881.2,640.0 878.2,642.0 880.8,644.0 879.1,646.0 876.7,648.0 879.3,650.0 881.2,652.0 877.6,654.0 880.7,656.0 876.8,658.0 878.1,660.0 879.2,662.0 880.1,664.0 881.3,666.0 879.6,668.0 881.6,670.0 880.6,672.0 878.4,674.0 880.2,676.0 878.0,678.0 881.2,680.0 879.0,682.0 879.8,684.0 881.4,686.0 878.7,688.0 880.1,690.0 878.5,692.0 878.3,694.0 880.7,696.0 879.1,698.0 879.2,700.0 877.2,702.0 881.4,704.0 879.8,706.0 879.2,708.0 878.7,710.0 877.4,712.1 881.2,714.1 876.8,716.1 878.1,718.1 879.4,720.1 880.0,722.1 881.0,724.1 878.7,726.1 877.0,728.1 878.6,730.1 880.3,732.1 878.7,734.1 880.8,736.2 881.0,738.2 877.2,740.2 878.9,742.2 876.7,744.2 879.4,746.2 880.2,748.2 878.2,750.2 879.7,752.2 878.5,754.2 881.7,756.2 881.2,758.3 881.2,760.3 877.1,762.3 879.7,764.3 880.9,766.3 879.2,768.3 878.1,770.5 874.6,772.7 872.8,774.9 866.0,777.1 863.2,779.3 862.0,781.5" stroke="#30d030" stroke-width="1.1" fill="none"/>
</svg></body></html>
